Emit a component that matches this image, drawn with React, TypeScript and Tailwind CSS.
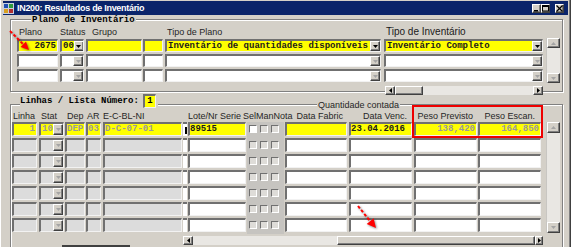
import React from 'react'

const sunk =
  'border-t-2 border-l-2 border-b border-r border-t-[#707070] border-l-[#707070] border-b-[#f2f2f2] border-r-[#f2f2f2]'
const raised =
  'bg-[#d4d0c8] border border-t-white border-l-white border-b-[#404040] border-r-[#404040] shadow-[inset_-1px_-1px_0_#808080]'
const mono = "font-['Liberation_Mono',monospace] font-bold text-[9px] leading-none"
const cell = 'shrink-0 flex items-center overflow-hidden whitespace-nowrap ' + sunk + ' ' + mono

type Dir = 'up' | 'down' | 'left' | 'right'

function Arrow({ dir, dark }: { dir: Dir; dark?: boolean }) {
  const side = dir === 'left' || dir === 'right'
  const w = side ? 3 : 5
  const h = side ? 5 : 3
  const pts = {
    down: '0,0 5,0 2.5,3',
    up: '2.5,0 5,3 0,3',
    left: '3,0 3,5 0,2.5',
    right: '0,0 3,2.5 0,5',
  }[dir]
  return (
    <svg width={w} height={h} viewBox={`0 0 ${w} ${h}`} className={dark ? 'fill-black' : 'fill-[#a4a4a4]'}>
      <polygon points={pts} />
    </svg>
  )
}

function DropBtn({ dark }: { dark?: boolean }) {
  return (
    <div className={`w-[10px] h-full shrink-0 flex items-center justify-center ${raised}`}>
      <Arrow dir="down" dark={dark} />
    </div>
  )
}

function VScroll({ className, btn }: { className: string; btn: string }) {
  return (
    <div className={`w-[14px] shrink-0 flex flex-col bg-[#e9e7e3] border-l border-[#c8c6c2] ${className}`}>
      <div className={`${btn} ${raised} flex items-center justify-center`}>
        <Arrow dir="up" />
      </div>
      <div className="flex-1" />
      <div className={`${btn} ${raised} flex items-center justify-center`}>
        <Arrow dir="down" />
      </div>
    </div>
  )
}

function AppIcon() {
  return (
    <svg width="11" height="11" viewBox="0 0 11 11" className="shrink-0">
      <rect x="0" y="0" width="11" height="11" fill="#c8d0e0" />
      <rect x="1" y="1" width="4" height="4" fill="#1f4fb0" />
      <rect x="6" y="1" width="4" height="4" fill="#2e9a3c" />
      <rect x="1" y="6" width="4" height="4" fill="#d8a020" />
      <rect x="6" y="6" width="4" height="4" fill="#b03030" />
    </svg>
  )
}

function WinBtn({ kind, className = '' }: { kind: 'min' | 'max' | 'close'; className?: string }) {
  return (
    <div className={`w-[9px] h-[9px] flex items-center justify-center ${raised} ${className}`}>
      <svg width="7" height="7" viewBox="0 0 7 7">
        {kind === 'min' && <rect x="1" y="5" width="4" height="1.5" fill="black" />}
        {kind === 'max' && (
          <g fill="none" stroke="black">
            <rect x="0.5" y="0.5" width="6" height="5.5" />
            <line x1="0" y1="1.5" x2="7" y2="1.5" />
          </g>
        )}
        {kind === 'close' && (
          <g stroke="black" strokeWidth="1.3">
            <line x1="0.5" y1="0.5" x2="6.5" y2="6.5" />
            <line x1="6.5" y1="0.5" x2="0.5" y2="6.5" />
          </g>
        )}
      </svg>
    </div>
  )
}

function TitleBar() {
  return (
    <div className="mx-[3px] mt-[1px] h-[14px] bg-[#0a246a] flex items-center pr-[4px]">
      <AppIcon />
      <span className="ml-[3px] text-white font-bold text-[9px] tracking-[-0.3px] leading-none">
        IN200: Resultados de Inventário
      </span>
      <div className="ml-auto flex items-center">
        <WinBtn kind="min" />
        <WinBtn kind="max" />
        <WinBtn kind="close" className="ml-[5px]" />
      </div>
    </div>
  )
}

function PlanoRow({ first }: { first?: boolean }) {
  const bg = first ? 'bg-[#ffff00]' : 'bg-white'
  return (
    <div className="flex h-[13px]">
      <div className={`${cell} h-[13px] w-[41px] justify-end pr-[1px] ${bg}`}>{first && '2675'}</div>
      <div className={`${cell} h-[13px] ml-[2px] w-[24px] ${bg}`}>
        <span className="flex-1 pl-[1px]">{first && '00'}</span>
        <DropBtn dark={first} />
      </div>
      <div className={`${cell} h-[13px] ml-[2px] w-[56px] ${bg}`} />
      <div className={`${cell} h-[13px] ml-[1px] w-[20px] ${bg}`} />
      <div className={`${cell} h-[13px] ml-[2px] w-[216px] ${bg}`}>
        <span className="flex-1 pl-[1px]">{first && 'Inventário de quantidades disponíveis'}</span>
        <DropBtn dark={first} />
      </div>
      <div className={`${cell} h-[13px] ml-[3px] w-[159px] ${bg}`}>
        <span className="flex-1 pl-[1px]">{first && 'Inventário Completo'}</span>
        <DropBtn dark={first} />
      </div>
    </div>
  )
}

function PlanoFrame() {
  return (
    <div className="relative ml-[10px] mt-[4px] w-[553px] h-[73px] border border-[#808080] shadow-[inset_1px_1px_0_#ffffff,1px_1px_0_#ffffff] pl-[6px] pt-[8px]">
      <div className={`absolute left-[20px] top-[-4px] px-[1px] bg-[#d4d0c8] text-black ${mono}`}>
        Plano de Inventário
      </div>
      <div className="flex h-[9px] items-end text-[9px] leading-none text-[#262626]">
        <div className="w-[43px] pl-[2px]">Plano</div>
        <div className="w-[26px]">Status</div>
        <div className="w-[79px] pl-[6px]">Grupo</div>
        <div className="w-[219px] pl-[2px]">Tipo de Plano</div>
        <div className="pl-[2px] text-[10px] text-[#1a1a1a]">Tipo de Inventário</div>
      </div>
      <div className="mt-[2px] flex">
        <div className="w-[526px] flex flex-col gap-[2px]">
          <PlanoRow first />
          <PlanoRow />
          <PlanoRow />
        </div>
        <VScroll className="ml-[3px] -mt-[1px] h-[45px]" btn="h-[10px]" />
      </div>
      <div className="ml-[368px] mt-[3px] w-[158px] h-[9px] flex bg-[#e9e7e3]">
        <div className={`w-[10px] h-full flex items-center justify-center ${raised}`}>
          <Arrow dir="left" dark />
        </div>
        <div className={`w-[28px] h-full ${raised}`} />
        <div className="flex-1" />
        <div className={`w-[10px] h-full flex items-center justify-center ${raised}`}>
          <Arrow dir="right" dark />
        </div>
      </div>
    </div>
  )
}

function Check({ on }: { on?: boolean }) {
  return (
    <div
      className={`w-[8px] h-[8px] border-t border-l border-b border-r border-t-[#707070] border-l-[#707070] border-b-white border-r-white ${
        on ? 'bg-white' : 'bg-[#dedcd8]'
      }`}
    />
  )
}

function LineRow({ first }: { first?: boolean }) {
  const dis = first ? 'bg-[#ffff00]' : 'bg-[#dcdcdc]'
  const wh = first ? 'bg-[#ffff00]' : 'bg-white'
  const grey = 'text-[#9a9a9a]'
  return (
    <div className="flex h-[16px] items-start">
      <div className={`${cell} h-[14px] w-[25px] justify-end pr-[1px] ${dis} ${grey}`}>{first && '1'}</div>
      <div className={`${cell} h-[14px] ml-[2px] w-[25px] ${dis}`}>
        <span className={`flex-1 pl-[1px] ${grey}`}>{first && '10'}</span>
        <DropBtn />
      </div>
      <div className={`${cell} h-[14px] ml-[1px] w-[20px] ${dis} ${grey}`}>{first && 'DEP'}</div>
      <div className={`${cell} h-[14px] ml-[1px] w-[15px] ${dis} ${grey}`}>{first && '03'}</div>
      <div className={`${cell} h-[14px] ml-[2px] w-[79px] ${dis} ${grey}`}>{first && 'D-C-07-01'}</div>
      <div className="ml-[1px] w-[4px] h-[14px] bg-white border-t-2 border-t-[#707070] flex items-center justify-end">
        {first && <span className="w-[2px] h-[7px] bg-black" />}
      </div>
      <div className={`${cell} h-[14px] ml-[1px] w-[58px] ${wh}`}>{first && '89515'}</div>
      <div className="ml-[1px] w-[37px] h-[16px] bg-[#c6c4c0] flex items-start pt-[3px] pl-[2px] gap-[3px]">
        <Check on={first} />
        <Check />
        <Check />
      </div>
      <div className={`${cell} h-[14px] ml-[1px] w-[62px] ${wh}`} />
      <div className={`${cell} h-[14px] ml-[2px] w-[63px] ${wh}`}>{first && '23.04.2016'}</div>
      <div className={`${cell} h-[14px] ml-[2px] w-[63px] justify-end pr-[1px] ${wh} ${grey}`}>
        {first && '138,420'}
      </div>
      <div className={`${cell} h-[14px] ml-[1px] w-[63px] justify-end pr-[1px] ${wh} ${grey}`}>
        {first && '164,850'}
      </div>
    </div>
  )
}

function LinhasFrame() {
  return (
    <div className="relative ml-[10px] mt-[12px] w-[553px] h-[160px] border border-[#808080] shadow-[inset_1px_1px_0_#ffffff,1px_1px_0_#ffffff] pl-[1px] pt-[7px]">
      <div className="absolute left-[9px] top-[-12px] h-[15px] flex items-end gap-[4px] bg-[#d4d0c8] pr-[2px]">
        <span className={`mb-[2px] text-black ${mono}`}>Linhas / Lista Número:</span>
        <div className={`${cell} w-[13px] h-[14px] justify-center bg-[#ffff00] text-black`}>1</div>
      </div>
      <div className="absolute left-[306px] top-[-4px] px-[1px] bg-[#d4d0c8] text-[9px] leading-none text-[#262626]">
        Quantidade contada
      </div>
      <div className="flex h-[9px] items-end text-[9px] leading-none text-[#262626] whitespace-nowrap">
        <div className="w-[27px] pl-[1px]">Linha</div>
        <div className="w-[26px] pl-[2px]">Stat</div>
        <div className="w-[21px] pl-[2px]">Dep</div>
        <div className="w-[17px] pl-[1px]">AR</div>
        <div className="w-[85px]">E-C-BL-NI</div>
        <div className="w-[55px]">Lote/Nr Serie</div>
        <div className="w-[53px]">SelManNota</div>
        <div className="w-[53px] text-right pr-[6px]">Data Fabric</div>
        <div className="w-[65px] text-right pr-[7px]">Data Venc.</div>
        <div className="w-[64px] text-right pr-[5px]">Peso Previsto</div>
        <div className="w-[65px] text-right pr-[8px]">Peso Escan.</div>
      </div>
      <div className="mt-[1px] flex">
        <div className="w-[529px] flex flex-col">
          <LineRow first />
          <LineRow />
          <LineRow />
          <LineRow />
          <LineRow />
          <LineRow />
          <LineRow />
        </div>
        <VScroll className="ml-[5px] h-[111px]" btn="h-[11px]" />
      </div>
      <div className="ml-[171px] mt-[2px] w-[360px] h-[9px] flex bg-[#e9e7e3]">
        <div className={`w-[10px] h-full flex items-center justify-center ${raised}`}>
          <Arrow dir="left" dark />
        </div>
        <div className="w-[144px]" />
        <div className={`flex-1 h-full ${raised}`} />
        <div className={`w-[8px] h-full flex items-center justify-center ${raised}`}>
          <Arrow dir="right" dark />
        </div>
      </div>
      <div className="ml-[50px] w-[68px] h-[2px] bg-[#404040]" />
    </div>
  )
}

function Annotations() {
  return (
    <>
      <div className="absolute left-[412px] top-[105px] w-[131px] h-[33px] border-2 border-[#ee0000]" />
      <svg
        className="absolute left-0 top-0 pointer-events-none drop-shadow-[1px_1px_1px_rgba(0,0,0,0.45)]"
        width="571"
        height="247"
      >
        <g stroke="#ff0000" strokeWidth="2" strokeDasharray="3 2" fill="none">
          <line x1="10" y1="31" x2="23" y2="44" />
          <line x1="358" y1="206" x2="370" y2="221" />
        </g>
        <polygon points="29,50 20.5,47 26,41.5" fill="#ff0000" />
        <polygon points="376,228 366.7,224.1 373.6,218.2" fill="#ff0000" />
      </svg>
    </>
  )
}

export default function App() {
  return (
    <div className="relative w-[571px] h-[247px] overflow-hidden bg-[#d4d0c8] font-['Liberation_Sans',Arial,sans-serif] text-[#1a1a1a] shadow-[inset_1px_0_0_#ffffff,inset_-1px_0_0_#404040,inset_-2px_0_0_#808080]">
      <TitleBar />
      <PlanoFrame />
      <LinhasFrame />
      <Annotations />
    </div>
  )
}
